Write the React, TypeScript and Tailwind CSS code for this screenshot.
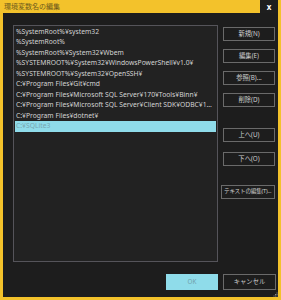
import React from 'react';

const paths = [
  '%SystemRoot%¥system32',
  '%SystemRoot%',
  '%SystemRoot%¥System32¥Wbem',
  '%SYSTEMROOT%¥System32¥WindowsPowerShell¥v1.0¥',
  '%SYSTEMROOT%¥System32¥OpenSSH¥',
  'C:¥Program Files¥Git¥cmd',
  'C:¥Program Files¥Microsoft SQL Server¥170¥Tools¥Binn¥',
  'C:¥Program Files¥Microsoft SQL Server¥Client SDK¥ODBC¥170¥Tools¥Binn¥',
  'C:¥Program Files¥dotnet¥',
  'C:¥SQLite3',
];

const SideButton = ({ label, top }: { label: string; top: number }) => (
  <div
    className="h-[14px] w-[52px] border border-[#6a6a6a] flex items-center justify-center text-[6.3px] leading-none text-[#cfcfcf] overflow-hidden whitespace-nowrap"
    style={{ marginTop: top }}
  >
    {label}
  </div>
);

export default function App() {
  return (
    <div
      className="w-[281px] h-[300px] bg-[#f3c22b] flex flex-col"
      style={{ fontFamily: '"Noto Sans", "Noto Sans CJK JP", sans-serif' }}
    >
      {/* title bar */}
      <div className="h-[13px] flex justify-between">
        <span className="ml-[4px] text-[7px] leading-[13px] text-[#6e5a1c]">環境変数名の編集</span>
        <div className="w-[18px] h-[13px] mr-[3px] bg-[#1e1e1e] flex items-center justify-center text-[8px] font-bold text-white leading-none">
          x
        </div>
      </div>

      {/* body */}
      <div className="flex-1 mx-[3px] mb-[3px] bg-[#1d1d1d] flex flex-col relative">
        <div className="flex pt-[12px] pl-[10px]">
          <div className="w-[205px] h-[237px] border border-[#55545a] bg-[#222222] pt-[0.75px]">
            {paths.map((p, i) => (
              <div
                key={i}
                className={
                  'h-[10.5px] mx-[1px] px-[1px] text-[6.75px] leading-[10.5px] whitespace-nowrap overflow-hidden text-ellipsis ' +
                  (i === paths.length - 1 ? 'bg-[#8fdcea] text-[#77a6b0]' : 'text-[#d4d4d4]')
                }
              >
                {p}
              </div>
            ))}
          </div>

          <div className="ml-[5px] flex flex-col">
            <SideButton label="新規(N)" top={2} />
            <SideButton label="編集(E)" top={8} />
            <SideButton label="参照(B)..." top={8} />
            <SideButton label="削除(D)" top={8} />
            <SideButton label="上へ(U)" top={21} />
            <SideButton label="下へ(O)" top={10} />
            <div className="h-[14px] w-[54px] -ml-[2px] mt-[19px] border border-[#6a6a6a] flex items-center px-[2px] text-[5.6px] leading-none tracking-[-0.2px] text-[#cfcfcf] overflow-hidden whitespace-nowrap">
              テキストの編集(T)...
            </div>
          </div>
        </div>

        <div className="flex justify-end gap-[5px] pr-[2px] mt-[12px]">
          <div className="w-[52px] h-[16px] bg-[#8fdcea] flex items-center justify-center text-[6.3px] text-[#6f9ea8]">
            OK
          </div>
          <div className="w-[53px] h-[16px] border border-[#6a6a6a] flex items-center justify-center text-[6.3px] text-[#cfcfcf]">
            キャンセル
          </div>
        </div>

        <svg className="absolute right-0 bottom-0" width="5" height="5" viewBox="0 0 5 5">
          <rect x="3.5" y="0.5" width="1" height="1" fill="#8a8a8a" />
          <rect x="2" y="2" width="1" height="1" fill="#8a8a8a" />
          <rect x="3.5" y="2" width="1" height="1" fill="#8a8a8a" />
          <rect x="0.5" y="3.5" width="1" height="1" fill="#8a8a8a" />
          <rect x="2" y="3.5" width="1" height="1" fill="#8a8a8a" />
          <rect x="3.5" y="3.5" width="1" height="1" fill="#8a8a8a" />
        </svg>
      </div>
    </div>
  );
}
